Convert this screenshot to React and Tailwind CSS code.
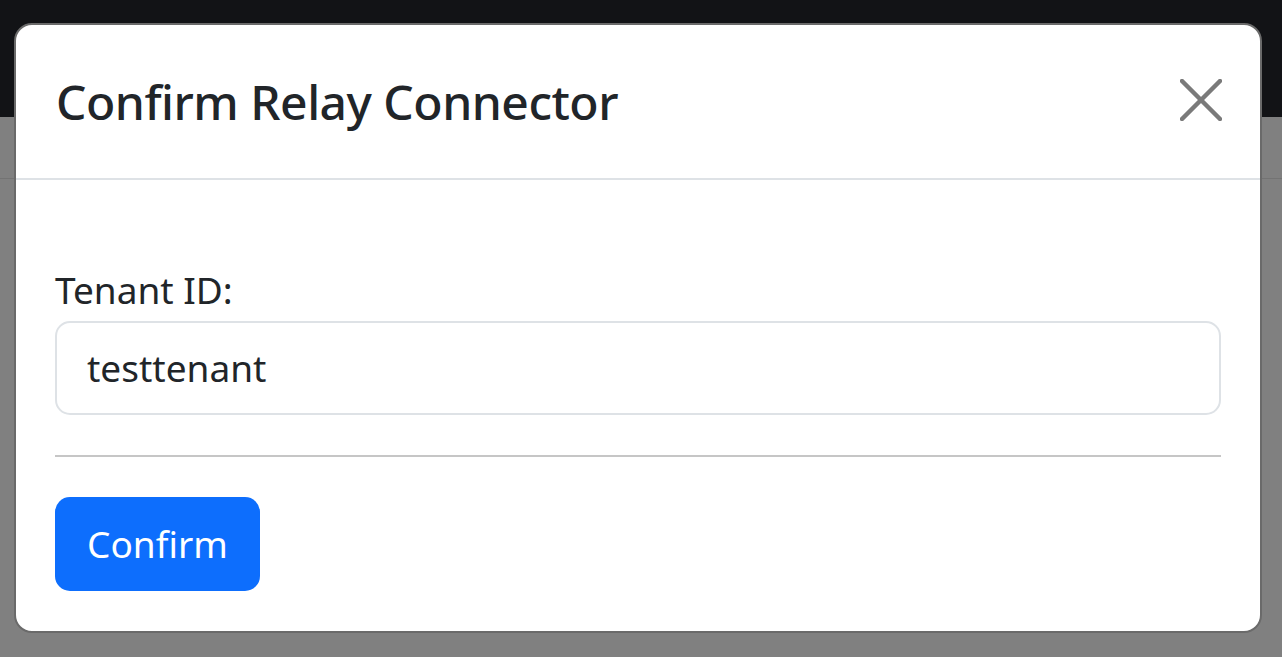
import React from 'react';

const CloseIcon = () => (
  <svg width="42" height="42" viewBox="0 0 42 42" fill="none" stroke="#7a7a7a" strokeWidth="4.5" strokeLinecap="round">
    <line x1="2" y1="2" x2="40" y2="40" />
    <line x1="40" y1="2" x2="2" y2="40" />
  </svg>
);

const App = () => {
  return (
    <div className="relative h-[657px] w-[1282px] overflow-hidden bg-[#808080] font-['Noto_Sans','Open_Sans',sans-serif]">
      <div className="h-[117px] bg-[#121316]" />
      <div className="h-[62px] border-b border-[#737373]" />

      <div className="absolute left-[14px] top-[23px] flex h-[610px] w-[1248px] flex-col rounded-[18px] border-2 border-[#6a6a6a] bg-white">
        <header className="flex h-[155px] items-center justify-between border-b-2 border-[#dee2e6] pl-[40px] pr-[38px]">
          <h5 className="text-[48px] font-medium leading-[60px] text-[#212529] tracking-[-0.5px]">Confirm Relay Connector</h5>
          <button className="mt-[-3px]"><CloseIcon /></button>
        </header>

        <div className="flex flex-col px-[39px] pt-[80px]">
          <label className="text-[37px] leading-[60px] text-[#212529]">Tenant ID:</label>
          <div className="mt-[1px] flex h-[94px] items-center rounded-[15px] border-2 border-[#dee2e6] px-[30px] text-[37px] text-[#212529]">
            testtenant
          </div>
          <hr className="mt-[40px] border-t-2 border-[#c6c6c6]" />
          <div className="mt-[40px]">
            <button className="h-[94px] w-[205px] rounded-[15px] bg-[#0d6efd] text-[37px] text-white">Confirm</button>
          </div>
        </div>
      </div>
    </div>
  );
};

export default App;
